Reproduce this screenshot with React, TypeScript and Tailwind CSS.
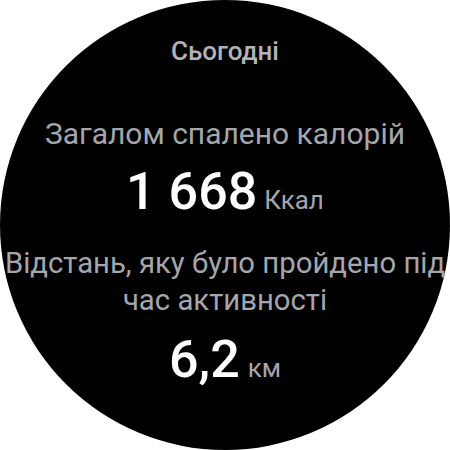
export default function App() {
  return (
    <div className="w-[450px] h-[450px] bg-white" style={{ fontFamily: 'Roboto, "Noto Sans", sans-serif' }}>
      <div className="w-[450px] h-[450px] rounded-full bg-black flex flex-col items-center text-center">
        {/* Заголовок */}
        <div className="mt-[37px] text-[26px] leading-[28px] font-medium text-[#b0b3b8]">Сьогодні</div>

        {/* Калорії */}
        <div className="mt-[50px] text-[30px] leading-[37px] text-[#a3a7ad] whitespace-nowrap">
          Загалом спалено калорій
        </div>
        <div className="mt-[10px] flex items-baseline h-[60px]">
          <span className="text-[52px] leading-[60px] font-medium text-white">1 668</span>
          <span className="ml-[7px] text-[26px] leading-[60px] text-[#a3a7ad]">Ккал</span>
        </div>

        {/* Відстань */}
        <div className="mt-[23px] text-[29.3px] leading-[37px] text-[#a3a7ad] whitespace-nowrap">
          Відстань, яку було пройдено під
          <br />
          час активності
        </div>
        <div className="mt-[11px] flex items-baseline h-[60px]">
          <span className="text-[52px] leading-[60px] font-medium text-white">6,2</span>
          <span className="ml-[8px] text-[26px] leading-[60px] text-[#a3a7ad]">км</span>
        </div>
      </div>
    </div>
  )
}
